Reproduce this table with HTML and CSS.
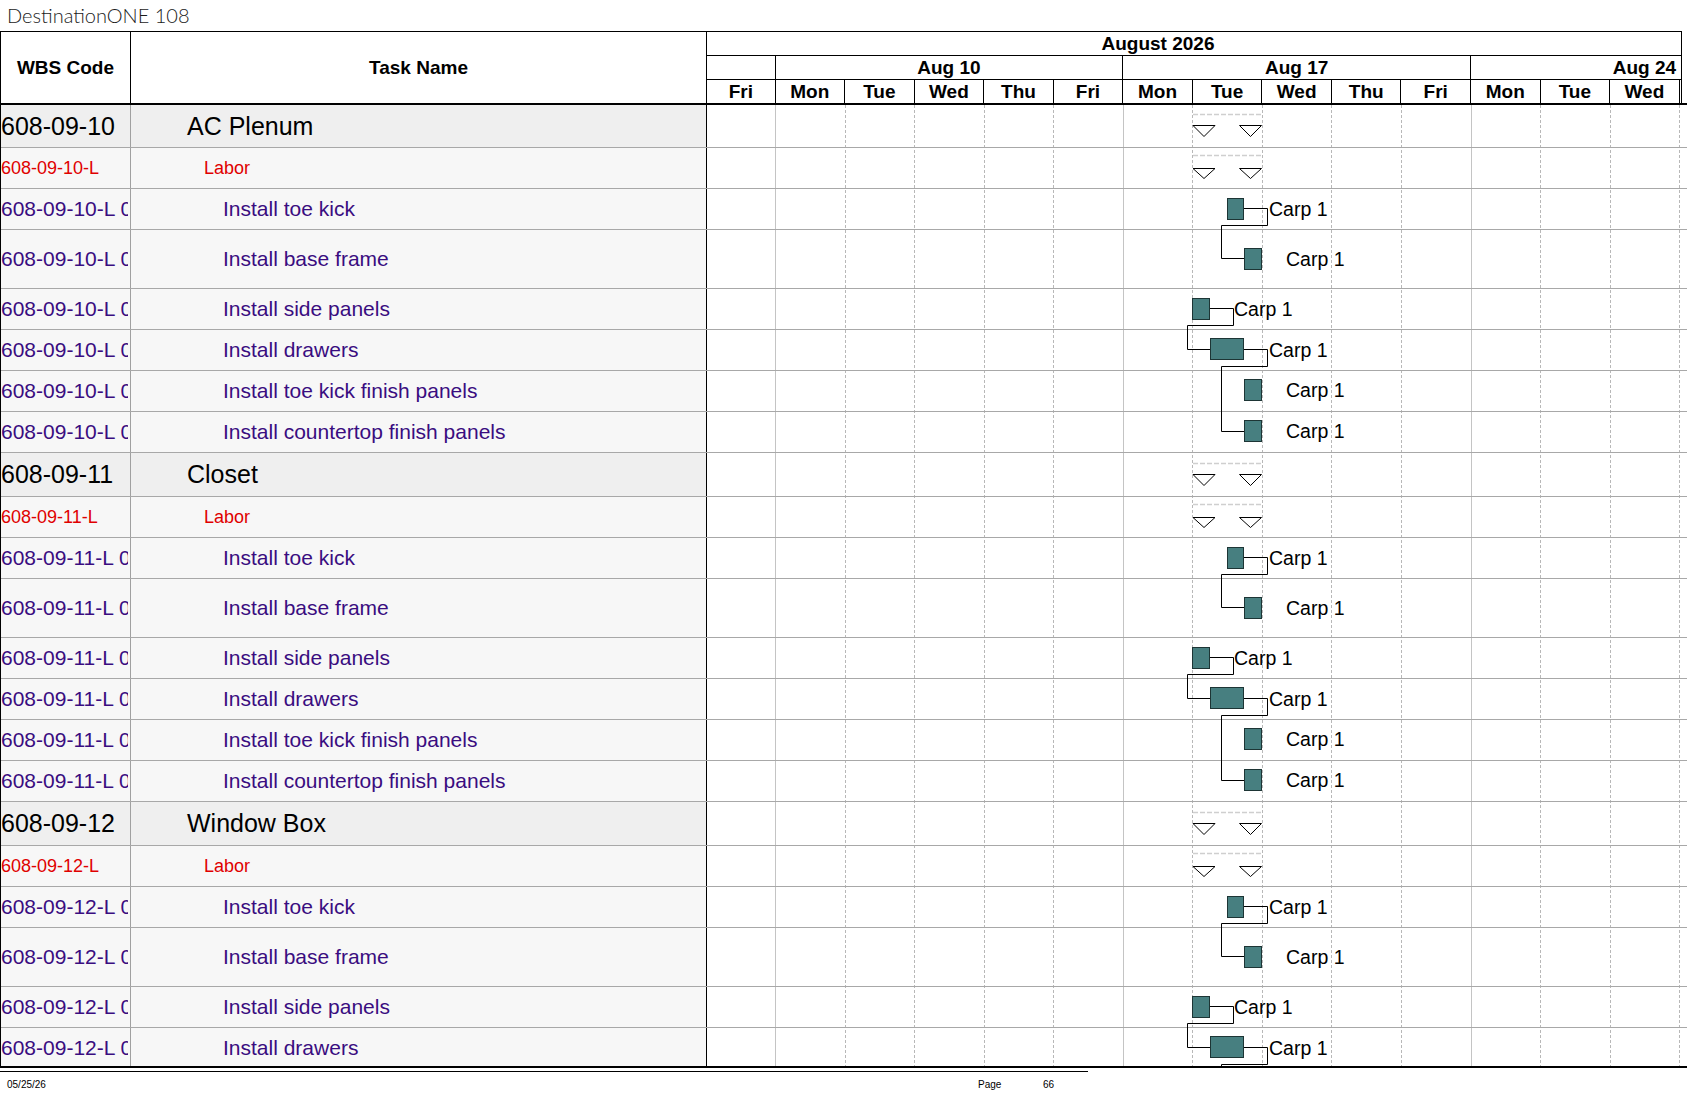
FILE: index.html
```html
<!DOCTYPE html>
<html lang="en">
<head>
<meta charset="utf-8">
<title>DestinationONE 108</title>
<link rel="stylesheet" href="styles.css">
</head>
<body>
<div class="title">DestinationONE 108</div>
<div class="sheet">
  <div class="head">
    <div class="hcell wbs">WBS Code</div>
    <div class="hcell task">Task Name</div>
    <div class="ghead">
      <div class="month">August 2026</div>
      <div class="weeks">
        <div class="wk first"></div>
        <div class="wk">Aug 10</div>
        <div class="wk">Aug 17</div>
        <div class="wk">Aug 24</div>
      </div>
      <div class="days">
        <div class="day">Fri</div>
        <div class="day">Mon</div><div class="day">Tue</div><div class="day">Wed</div><div class="day">Thu</div><div class="day">Fri</div>
        <div class="day">Mon</div><div class="day">Tue</div><div class="day">Wed</div><div class="day">Thu</div><div class="day">Fri</div>
        <div class="day">Mon</div><div class="day">Tue</div><div class="day">Wed</div><div class="day"></div>
      </div>
    </div>
    <div class="hfill"></div>
  </div>

  <div class="body">
    <div class="cols">
      <div class="row grp first"><div class="c-wbs"><span>608-09-10</span></div><div class="c-task">AC Plenum</div></div>
      <div class="row lab"><div class="c-wbs"><span>608-09-10-L</span></div><div class="c-task">Labor</div></div>
      <div class="row tsk"><div class="c-wbs"><span>608-09-10-L 010</span></div><div class="c-task">Install toe kick</div></div>
      <div class="row tsk tall"><div class="c-wbs"><span>608-09-10-L 020</span></div><div class="c-task">Install base frame</div></div>
      <div class="row tsk"><div class="c-wbs"><span>608-09-10-L 030</span></div><div class="c-task">Install side panels</div></div>
      <div class="row tsk"><div class="c-wbs"><span>608-09-10-L 040</span></div><div class="c-task">Install drawers</div></div>
      <div class="row tsk"><div class="c-wbs"><span>608-09-10-L 050</span></div><div class="c-task">Install toe kick finish panels</div></div>
      <div class="row tsk"><div class="c-wbs"><span>608-09-10-L 060</span></div><div class="c-task">Install countertop finish panels</div></div>

      <div class="row grp"><div class="c-wbs"><span>608-09-11</span></div><div class="c-task">Closet</div></div>
      <div class="row lab"><div class="c-wbs"><span>608-09-11-L</span></div><div class="c-task">Labor</div></div>
      <div class="row tsk"><div class="c-wbs"><span>608-09-11-L 010</span></div><div class="c-task">Install toe kick</div></div>
      <div class="row tsk tall"><div class="c-wbs"><span>608-09-11-L 020</span></div><div class="c-task">Install base frame</div></div>
      <div class="row tsk"><div class="c-wbs"><span>608-09-11-L 030</span></div><div class="c-task">Install side panels</div></div>
      <div class="row tsk"><div class="c-wbs"><span>608-09-11-L 040</span></div><div class="c-task">Install drawers</div></div>
      <div class="row tsk"><div class="c-wbs"><span>608-09-11-L 050</span></div><div class="c-task">Install toe kick finish panels</div></div>
      <div class="row tsk"><div class="c-wbs"><span>608-09-11-L 060</span></div><div class="c-task">Install countertop finish panels</div></div>

      <div class="row grp"><div class="c-wbs"><span>608-09-12</span></div><div class="c-task">Window Box</div></div>
      <div class="row lab"><div class="c-wbs"><span>608-09-12-L</span></div><div class="c-task">Labor</div></div>
      <div class="row tsk"><div class="c-wbs"><span>608-09-12-L 010</span></div><div class="c-task">Install toe kick</div></div>
      <div class="row tsk tall"><div class="c-wbs"><span>608-09-12-L 020</span></div><div class="c-task">Install base frame</div></div>
      <div class="row tsk"><div class="c-wbs"><span>608-09-12-L 030</span></div><div class="c-task">Install side panels</div></div>
      <div class="row tsk"><div class="c-wbs"><span>608-09-12-L 040</span></div><div class="c-task">Install drawers</div></div>
    </div>

    <svg class="chart" width="980" height="961" viewBox="0 0 980 961" xmlns="http://www.w3.org/2000/svg">
      <path class="wkline" d="M68.5 0V961M416.5 0V961M764.5 0V961"/>
      <path class="dayline" d="M138.5 0V961M207.5 0V961M277.5 0V961M346.5 0V961M485.5 0V961M555.5 0V961M624.5 0V961M694.5 0V961M833.5 0V961M903.5 0V961M972.5 0V961"/>
      <g id="blk">
        <path class="rowline" d="M0 42.5H980M0 83.5H980M0 124.5H980M0 183.5H980M0 224.5H980M0 265.5H980M0 306.5H980M0 347.5H980"/>
        <path class="sumline" d="M486 9.5H556M486 50.5H556"/>
        <path class="tri" d="M486 20.5H508L497 31.5ZM532.5 20.5H554.5L543.5 31.5ZM486 63.5H508L497 73.5ZM532.5 63.5H554.5L543.5 73.5Z"/>
        <path class="link" d="M537 103.5H560.5V120.5H514.5V153.5H537M503 203.5H526.5V220.5H480.5V244.5H503M537 244.5H560.5V261.5H514.5V326.5H537"/>
        <rect class="bar" x="520.5" y="93.5" width="16" height="21"/>
        <rect class="bar" x="537.5" y="143.5" width="17" height="21"/>
        <rect class="bar" x="485.5" y="193.5" width="17" height="21"/>
        <rect class="bar" x="503.5" y="233.5" width="33" height="21"/>
        <rect class="bar" x="537.5" y="274.5" width="17" height="21"/>
        <rect class="bar" x="537.5" y="315.5" width="17" height="21"/>
        <text class="lbl" x="562" y="110.5">Carp 1</text>
        <text class="lbl" x="579" y="161">Carp 1</text>
        <text class="lbl" x="527" y="211">Carp 1</text>
        <text class="lbl" x="562" y="251.5">Carp 1</text>
        <text class="lbl" x="579" y="292">Carp 1</text>
        <text class="lbl" x="579" y="333">Carp 1</text>
      </g>
      <use href="#blk" y="349"/>
      <use href="#blk" y="698"/>
    </svg>
  </div>
</div>
<div class="footer">
  <span>05/25/26</span>
  <span>Page</span>
  <span>66</span>
</div>
</body>
</html>
```

FILE: styles.css
```css
* { box-sizing: border-box; }

body {
  margin: 0;
  background: #fff;
  font-family: "Liberation Sans", Arial, sans-serif;
  color: #000;
}

.title {
  height: 31px;
  padding-left: 7px;
  font-family: Lato, "Open Sans", sans-serif;
  font-weight: 300;
  font-size: 20px;
  line-height: 30px;
  color: #1b1b1b;
}

.sheet {
  width: 1687px;
  border-left: 1px solid #000;
  overflow: hidden;
}

/* ---------- header ---------- */
.head {
  display: flex;
  height: 74px;
  border-bottom: 2px solid #000;
}

.hcell {
  flex: none;
  border-top: 1px solid #000;
  border-right: 1px solid #000;
  display: flex;
  align-items: center;
  justify-content: center;
  font-weight: bold;
  font-size: 19px;
}
.hcell.wbs { width: 130px; }
.hcell.task { width: 576px; }

.ghead {
  flex: none;
  width: 975px;
  border-top: 1px solid #000;
  border-right: 1px solid #000;
  display: flex;
  flex-direction: column;
  overflow: hidden;
  font-weight: bold;
  font-size: 19px;
}
.hfill { flex: 1; }

.month {
  height: 24px;
  border-bottom: 1px solid #000;
  padding-right: 72px;
  text-align: center;
  line-height: 23px;
}

.weeks, .days { display: flex; }
.weeks {
  height: 24px;
  border-bottom: 1px solid #000;
}
.wk {
  flex: 0 0 347.75px;
  border-right: 1px solid #000;
  text-align: center;
  line-height: 23px;
  white-space: nowrap;
}
.wk.first { flex-basis: 68.55px; }

.days { height: 23px; }
.day {
  flex: 0 0 69.55px;
  border-right: 1px solid #000;
  text-align: center;
  line-height: 23px;
}
.day:first-child { flex-basis: 68.55px; }

/* ---------- body ---------- */
.body {
  display: flex;
  height: 963px;
  border-bottom: 2px solid #000;
  overflow: hidden;
}

.cols {
  flex: none;
  width: 706px;
}

.row {
  display: flex;
  height: 41px;
  border-bottom: 1px solid #a8a8a8;
  background: #f7f7f7;
  white-space: nowrap;
}
.row.grp { height: 44px; background: #efefef; font-size: 25px; color: #000; }
.row.grp.first { height: 43px; }
.row.tall { height: 59px; }
.row.lab { font-size: 18px; color: #e00000; }
.row.tsk { font-size: 21px; color: #3a0d80; }

.c-wbs {
  flex: none;
  width: 130px;
  border-right: 1px solid #a0a0a0;
  padding-right: 2px;
  display: flex;
  align-items: center;
}
.c-wbs span {
  flex: 1;
  min-width: 0;
  overflow: hidden;
}

.c-task {
  flex: none;
  width: 576px;
  border-right: 1px solid #000;
  display: flex;
  align-items: center;
  overflow: hidden;
}
.grp .c-task { padding-left: 56px; }
.lab .c-task { padding-left: 73px; }
.tsk .c-task { padding-left: 92px; }

.chart {
  flex: none;
  display: block;
  background: #fff;
}

.wkline { stroke: #c4c4c4; stroke-width: 1; fill: none; }
.dayline { stroke: #b8b8b8; stroke-width: 1; stroke-dasharray: 3 2; fill: none; }
.rowline { stroke: #a8a8a8; stroke-width: 1; fill: none; }
.sumline { stroke: #cfcfcf; stroke-width: 1.5; stroke-dasharray: 5 2; fill: none; }
.tri { fill: #fff; stroke: #000; stroke-width: 1; }
.link { fill: none; stroke: #000; stroke-width: 1; }
.bar { fill: #477f80; stroke: #1d3535; stroke-width: 1; }
.lbl {
  font-family: "Liberation Sans", Arial, sans-serif;
  font-size: 19.5px;
  fill: #000;
}

/* ---------- footer ---------- */
.footer {
  width: 1088px;
  margin-top: 3px;
  border-top: 1px solid #000;
  padding: 7px 0 0 7px;
  display: grid;
  grid-template-columns: 971px 65px auto;
  font-size: 10px;
  line-height: 11px;
  color: #000;
}
```
